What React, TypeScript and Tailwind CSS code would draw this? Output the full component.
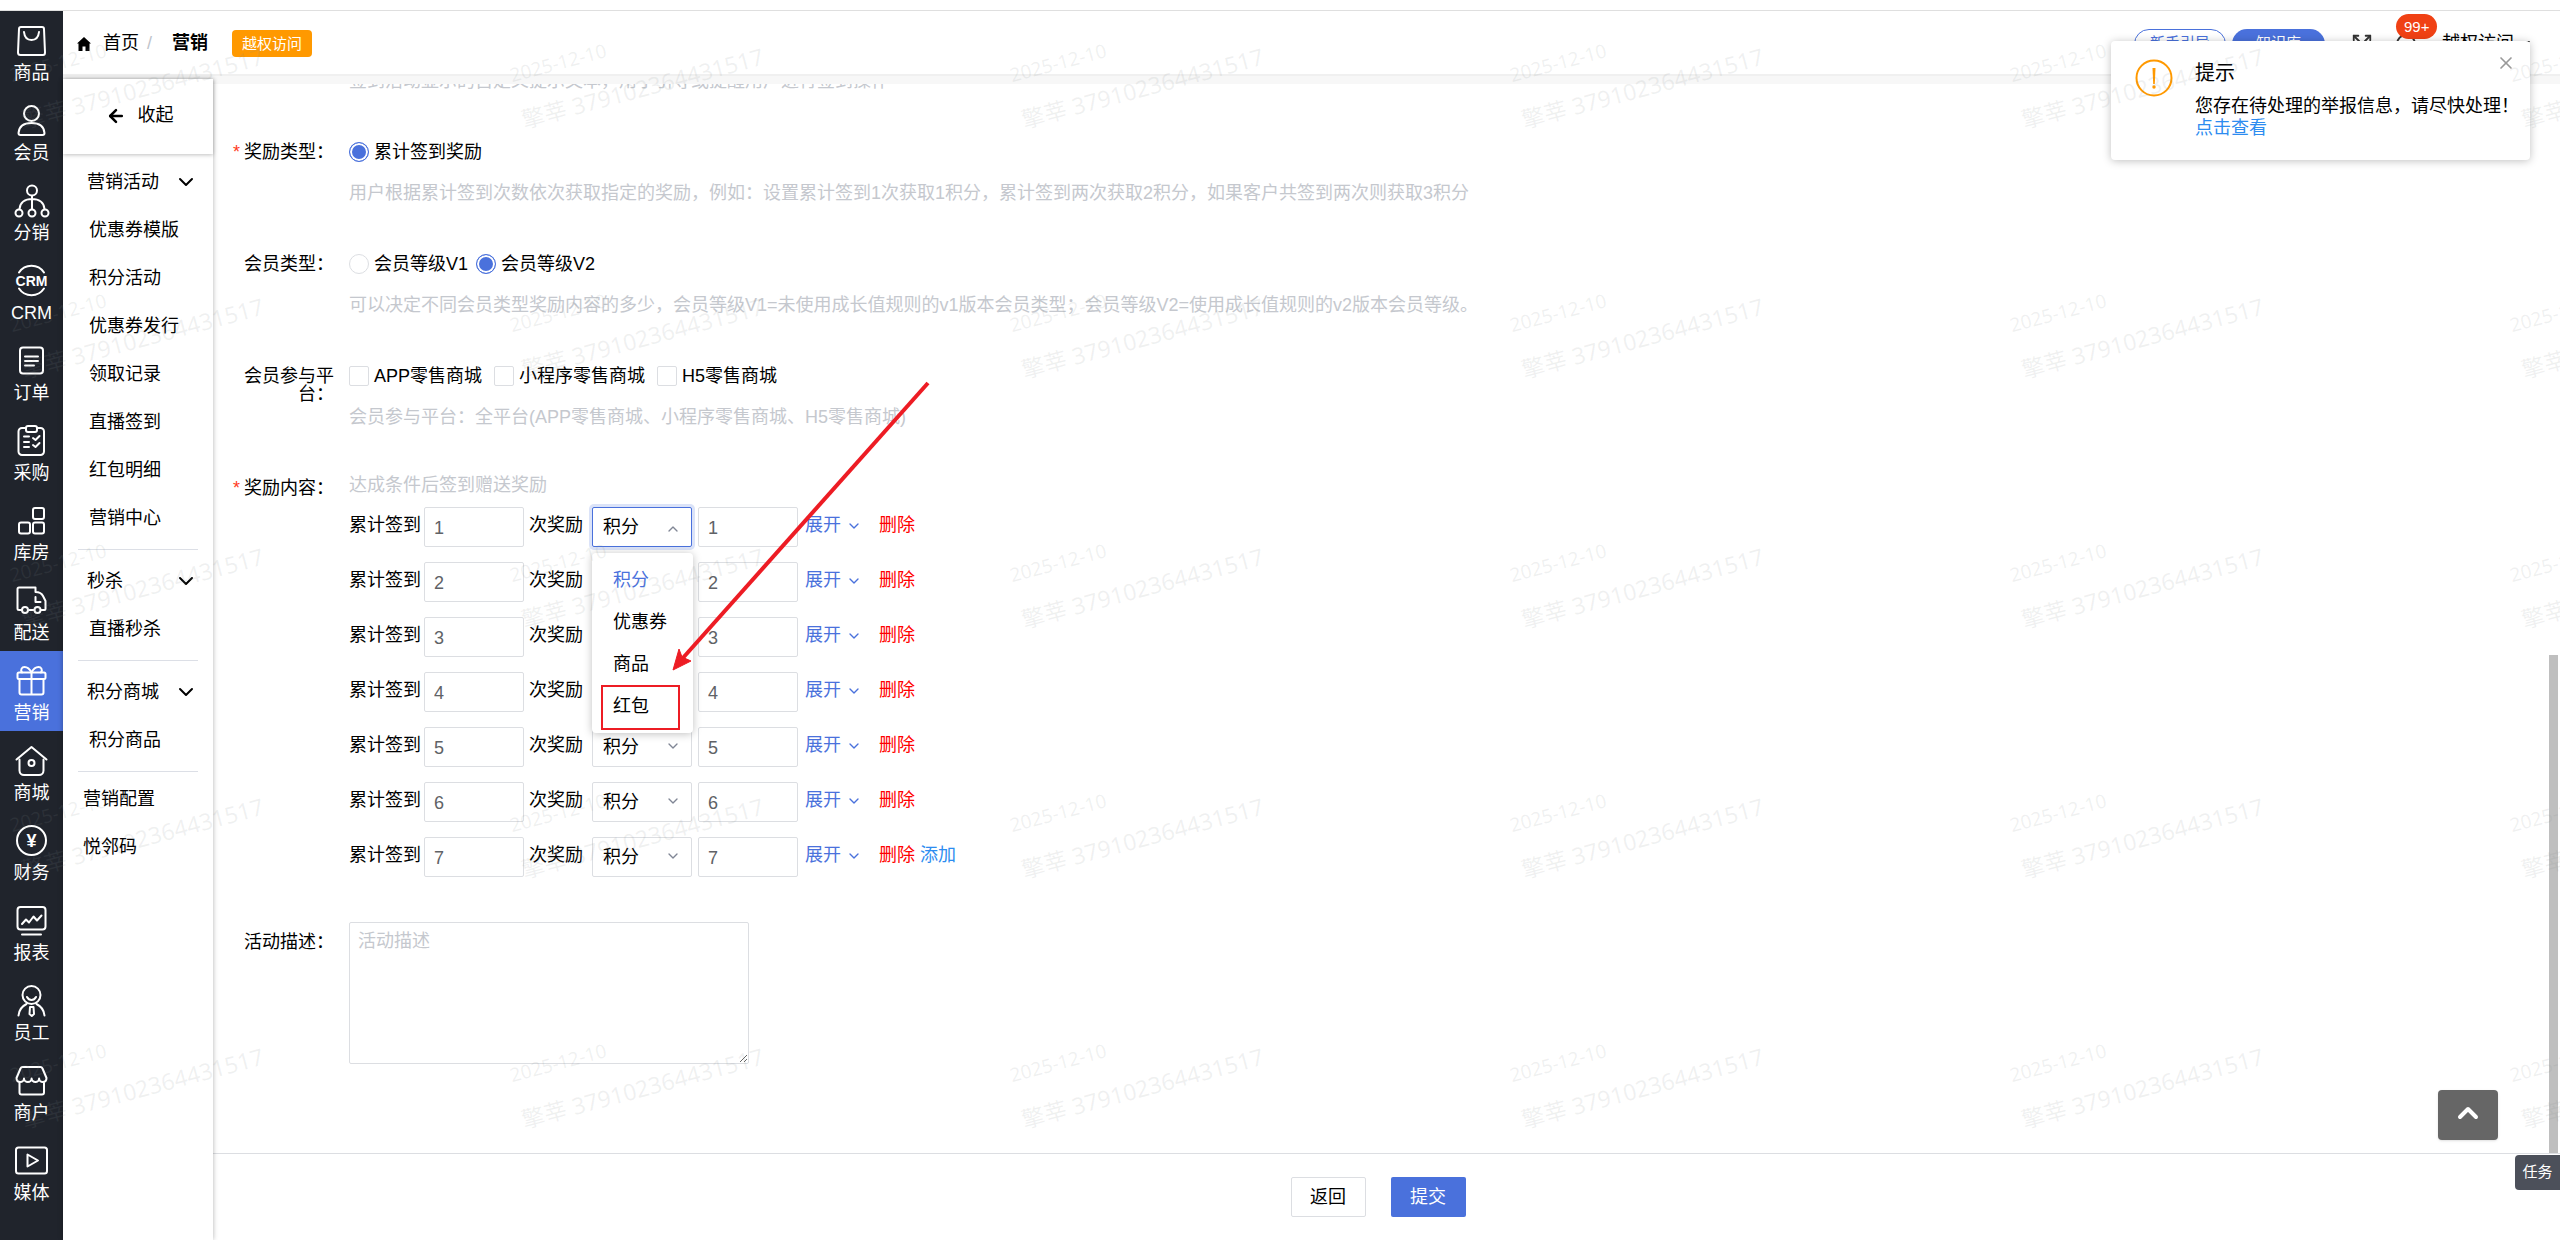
import { type ReactNode } from "react";
import { ArrowLeft, ChevronDown, ChevronUp, Expand, X } from "lucide-react";

type RailItem = { label: string; icon: ReactNode; active?: boolean };

const railItems: RailItem[] = [
  {
    label: "商品",
    icon: (
      <>
        <path d="M5 2h21c1 0 2 1 2 2l1 23.500c0 1.500-1 2.500-2 2.500H4.500c-1.500 0-2.500-1-2.500-2.500L3 4c0-1 1-2 2-2z" />
        <path d="M8 7c.5 5 3.500 8 7.500 8S22.500 12 23 7" />
      </>
    ),
  },
  {
    label: "会员",
    icon: (
      <>
        <circle cx="15.500" cy="8.500" r="7.500" />
        <path d="M4.500 30C3 30 2.500 29 2.500 28 3 21.500 8 18 15.500 18S28 21.500 28.500 28c0 1-.5 2-2 2z" />
      </>
    ),
  },
  {
    label: "分销",
    icon: (
      <>
        <circle cx="16" cy="5.500" r="5" />
        <circle cx="3" cy="28" r="3.500" />
        <circle cx="16" cy="28" r="3.500" />
        <circle cx="29" cy="28" r="3.500" />
        <path d="M16 11v13M3.500 24C4 17.500 9 14 16 14s12 3.500 12.500 10" />
      </>
    ),
  },
  {
    label: "CRM",
    icon: (
      <>
        <path d="M3 7.500a15 15 0 0 1 25 0M3 23.500a15 15 0 0 0 25 0" />
        <text
          x="15.500"
          y="20.500"
          textAnchor="middle"
          className="fill-white stroke-none text-[14px] font-bold"
        >
          CRM
        </text>
      </>
    ),
  },
  {
    label: "订单",
    icon: (
      <>
        <rect x="4" y="2.500" width="23" height="26" rx="3" />
        <path d="M9 11.500h13M9 16h13M9 20.500h9" />
      </>
    ),
  },
  {
    label: "采购",
    icon: (
      <>
        <path d="M10 3H6a3.500 3.500 0 0 0-3.500 3.500v20A3.500 3.500 0 0 0 6 30h18.500a3.500 3.500 0 0 0 3.500-3.500v-20A3.500 3.500 0 0 0 24.500 3H21" />
        <rect x="10" y="1" width="11" height="6" rx="2" />
        <path d="M8 11.500h5M8 17h5M8 22h5M17 13l2.500 2 4-4M17 20l2.500 2 4-4" />
      </>
    ),
  },
  {
    label: "库房",
    icon: (
      <>
        <rect x="17" y="3" width="11" height="11" rx="2" />
        <rect x="3" y="17.500" width="11" height="11" rx="2" />
        <rect x="17" y="17.500" width="11" height="11" rx="2" />
      </>
    ),
  },
  {
    label: "配送",
    icon: (
      <>
        <path d="M5.500 25H3c-1 0-1.500-.5-1.500-1.500V4c0-1 .5-1.500 1.500-1.500h16.500V7c3.500 0 6 1 7.500 4l2.500 5v8c0 .6-.4 1-1 1H25" />
        <path d="M12.500 25H18M19.500 12v5h5" />
        <circle cx="9" cy="25" r="3" />
        <circle cx="21.500" cy="25" r="3" />
      </>
    ),
  },
  {
    label: "营销",
    active: true,
    icon: (
      <>
        <rect x="1.500" y="7.500" width="28" height="6.500" rx="1.500" />
        <path d="M3.500 14v13.500c0 1 .8 2 2 2h20c1.200 0 2-1 2-2V14M15.500 7.500v22" />
        <path d="M6 7.500C4 4.500 6 2 8.500 2c3 0 5.500 2.500 7 5.500M25 7.500C27 4.500 25 2 22.500 2c-3 0-5.500 2.500-7 5.500" />
      </>
    ),
  },
  {
    label: "商城",
    icon: (
      <>
        <path d="M.5 14.500 15.500 2l15 12.500" />
        <path d="M3.500 14.500v11a4.500 4.500 0 0 0 4.500 4.500h15a4.500 4.500 0 0 0 4.500-4.500v-11" />
        <circle cx="15.500" cy="18" r="3" />
      </>
    ),
  },
  {
    label: "财务",
    icon: (
      <>
        <circle cx="15.500" cy="15.500" r="14.500" />
        <text
          x="15.500"
          y="21.500"
          textAnchor="middle"
          className="fill-white stroke-none text-[18px] font-bold"
        >
          ¥
        </text>
      </>
    ),
  },
  {
    label: "报表",
    icon: (
      <>
        <rect x="1.500" y="2" width="28" height="22.500" rx="3" />
        <path d="M6 19l4-4.500 3 3 4.500-6 3.500 4 4.500-5M6 29.500h19" />
      </>
    ),
  },
  {
    label: "员工",
    icon: (
      <>
        <circle cx="15.500" cy="10" r="9" />
        <path d="M11 12c1 2 2.500 3 4.500 3s3.500-1 4.500-3" />
        <path d="M2.500 30.500c.5-5.500 3-9 8-11.500M28.500 30.500c-.5-5.500-3-9-8-11.500" />
        <path d="M14 22h3.500l.5 7-2.200 2L13.500 29z" />
      </>
    ),
  },
  {
    label: "商户",
    icon: (
      <>
        <path d="M6.500 2h18c1 0 1.500.5 2 1.500L30.500 13c0 2.500-1.500 4-3.700 4-2 0-3.700-1.500-3.700-3.500 0 2-1.700 3.500-3.700 3.500s-3.800-1.500-3.800-3.500c0 2-1.700 3.500-3.700 3.500S8 15.500 8 13.500C8 15.500 6.300 17 4.200 17 2 17 .5 15.500.5 13l4-9.500c.5-1 1-1.500 2-1.500z" />
        <path d="M3.500 18v9.500c0 1.300.8 2 2 2h20.500c1.200 0 2-.7 2-2V18" />
      </>
    ),
  },
  {
    label: "媒体",
    icon: (
      <>
        <rect x="0" y="2.500" width="31" height="26" rx="2.500" />
        <path d="M11.500 9.500v12l10.500-6z" />
      </>
    ),
  },
];

const menuGroups = [
  {
    title: "营销活动",
    items: [
      "优惠券模版",
      "积分活动",
      "优惠券发行",
      "领取记录",
      "直播签到",
      "红包明细",
      "营销中心",
    ],
  },
  { title: "秒杀", items: ["直播秒杀"] },
  { title: "积分商城", items: ["积分商品"] },
];

const rewardRows = [1, 2, 3, 4, 5, 6, 7];
const rewardTypes = ["积分", "优惠券", "商品", "红包"];

function Rail() {
  return (
    <nav className="w-[63px] shrink-0 bg-[#20242c] text-white">
      {railItems.map((item) => (
        <a
          key={item.label}
          href="#"
          className={`flex h-20 flex-col items-center pt-[14px] ${item.active ? "bg-[#4a71dc]" : ""}`}
        >
          <svg
            viewBox="0 0 32 32"
            className="h-8 w-8 shrink-0 overflow-visible"
            fill="none"
            stroke="currentColor"
            strokeWidth="2"
            strokeLinecap="round"
            strokeLinejoin="round"
          >
            {item.icon}
          </svg>
          <span className="mt-[6px] leading-5">{item.label}</span>
        </a>
      ))}
    </nav>
  );
}

function Header() {
  return (
    <header className="flex h-[63px] shrink-0 items-center bg-white pt-[2px] pr-[30px] pl-[14px]">
      <svg viewBox="0 0 14 14" className="h-[14px] w-[14px]">
        <path d="M7 0 14 6.500h-1.500V14H8.500V9.500h-3V14h-4V6.500H0z" />
      </svg>
      <a href="#" className="ml-3">
        首页
      </a>
      <span className="ml-2 text-[#c0c4cc]">/</span>
      <strong className="ml-5">营销</strong>
      <span className="ml-6 rounded-sm bg-[#ff9900] px-[10px] text-[15px] leading-[27px] text-white">
        越权访问
      </span>
      <div className="ml-auto flex items-center">
        <button className="h-[30px] w-[92px] rounded-full border border-[#4a71dc] text-[15px] text-[#4a71dc]">
          新手引导
        </button>
        <button className="ml-[6px] h-[30px] w-[93px] rounded-full bg-[#4a71dc] text-[15px] text-white">
          知识库
        </button>
        <Expand className="ml-[26px] h-[22px] w-[22px] text-[#333]" />
        <div className="relative ml-[23px] h-5 w-5">
          <span className="block h-5 w-5 rounded-full border-2 border-[#333]" />
          <span className="absolute bottom-[15px] left-0 rounded-full bg-[#f04114] px-2 text-[15px] leading-[25px] text-white">
            99+
          </span>
        </div>
        <button className="ml-[26px] flex items-center gap-[6px]">
          越权访问
          <svg viewBox="0 0 10 6" className="h-[6px] w-[10px]">
            <path d="M0 0h10L5 6z" />
          </svg>
        </button>
      </div>
    </header>
  );
}

function SubMenu() {
  return (
    <aside className="z-10 mt-[3px] w-[150px] shrink-0 bg-white shadow-[0_0_5px_rgba(0,0,0,0.3)]">
      <button className="flex h-[75px] w-full items-center justify-center gap-3 pr-[2px] pb-[2px] pl-[5px] shadow-[0_1px_4px_rgba(0,0,0,0.25)]">
        <ArrowLeft className="h-5 w-5" strokeWidth={3} />
        收起
      </button>
      <div className="mt-1">
        {menuGroups.map((group) => (
          <section key={group.title}>
            <button className="flex h-12 w-full items-center justify-between pr-[15px] pl-6">
              {group.title}
              <ChevronDown className="h-6 w-6" />
            </button>
            {group.items.map((item) => (
              <a
                key={item}
                href="#"
                className="flex h-12 items-center pl-[26px]"
              >
                {item}
              </a>
            ))}
            <hr className="mx-[15px] my-[7px] border-[#dcdfe6]" />
          </section>
        ))}
        <div className="-mt-1">
          <a href="#" className="flex h-12 items-center pl-5">
            营销配置
          </a>
          <a href="#" className="flex h-12 items-center pl-5">
            悦邻码
          </a>
        </div>
      </div>
    </aside>
  );
}

type FormItemProps = {
  label: string;
  htmlFor?: string;
  required?: boolean;
  children: ReactNode;
};

function FormItem({ label, htmlFor, required, children }: FormItemProps) {
  return (
    <div className="flex">
      <label
        htmlFor={htmlFor}
        className="mt-[11px] mr-[15px] w-[110px] shrink-0 text-right leading-[18px]"
      >
        {required && <span className="mr-1 text-[#ff3b1d]">*</span>}
        {label}
      </label>
      <div className="min-w-0">{children}</div>
    </div>
  );
}

function Hint({ children }: { children: ReactNode }) {
  return <p className="leading-5 text-[#c5c8ce]">{children}</p>;
}

function Radio({
  name,
  label,
  checked,
}: {
  name: string;
  label: string;
  checked?: boolean;
}) {
  return (
    <label className="flex items-center gap-[5px]">
      <input
        type="radio"
        name={name}
        defaultChecked={checked}
        className="h-5 w-5 appearance-none rounded-full border border-[#dcdee2] bg-white checked:border-[#4a71dc] checked:bg-[#4a71dc] checked:shadow-[inset_0_0_0_2px_white]"
      />
      {label}
    </label>
  );
}

function Checkbox({ label }: { label: string }) {
  return (
    <label className="flex items-center gap-[5px]">
      <input
        type="checkbox"
        className="h-5 w-5 appearance-none rounded-xs border border-[#dcdee2] bg-white checked:bg-[#4a71dc]"
      />
      {label}
    </label>
  );
}

function RewardSelect({ open }: { open: boolean }) {
  return (
    <div className="relative ml-[9px]">
      <select
        aria-label="奖励类型"
        className={`block h-10 w-[100px] appearance-none rounded-xs border bg-white pl-[10px] ${open ? "border-[#4a71dc] shadow-[0_0_0_3px_rgba(74,113,220,0.2)]" : "border-[#dcdee2]"}`}
      >
        {rewardTypes.map((type) => (
          <option key={type}>{type}</option>
        ))}
      </select>
      {open ? (
        <ChevronUp className="pointer-events-none absolute top-[14px] right-[11px] h-4 w-4 text-[#808695]" />
      ) : (
        <ChevronDown className="pointer-events-none absolute top-[11px] right-[11px] h-4 w-4 text-[#808695]" />
      )}
      {open && (
        <ul className="absolute top-[46px] left-0 z-20 w-[101px] rounded-sm bg-white py-[6px] shadow-[0_1px_8px_rgba(0,0,0,0.25)]">
          {rewardTypes.map((type, index) => (
            <li
              key={type}
              className={`flex h-[42px] items-center pl-[21px] ${index === 0 ? "text-[#4a71dc]" : ""}`}
            >
              {type}
            </li>
          ))}
        </ul>
      )}
      {open && <Callout />}
    </div>
  );
}

// Red arrow and box pointing at the last option of the open list
function Callout() {
  return (
    <svg
      viewBox="0 0 340 352"
      className="pointer-events-none absolute -top-[127px] left-0 z-30 h-[352px] w-[340px] max-w-none"
    >
      <path d="M336 3 90 279" stroke="#ed1c24" strokeWidth="4" />
      <path
        d="m81 290 6-21 3 8 9 4z"
        fill="#ed1c24"
        stroke="#ed1c24"
        strokeLinejoin="round"
      />
      <rect
        x="10"
        y="306"
        width="77"
        height="43"
        fill="none"
        stroke="#ed1c24"
        strokeWidth="2"
      />
    </svg>
  );
}

function RewardRow({ day }: { day: number }) {
  const inputClass =
    "h-10 w-[100px] rounded-xs border border-[#dcdee2] bg-white px-[9px] pt-[3px] text-[#606266]";
  return (
    <div className="flex h-10">
      <label htmlFor={`day-${day}`} className="leading-[37px]">
        累计签到
      </label>
      <input
        id={`day-${day}`}
        defaultValue={day}
        className={`ml-[3px] ${inputClass}`}
      />
      <span className="ml-[5px] leading-[37px]">次奖励</span>
      <RewardSelect open={day === 1} />
      <input
        aria-label="奖励数量"
        defaultValue={day}
        className={`ml-[6px] ${inputClass}`}
      />
      <button className="ml-[7px] flex h-[37px] items-center gap-[5px] text-[#4a71dc]">
        展开
        <ChevronDown className="h-4 w-4" />
      </button>
      <button className="ml-[17px] h-[37px] text-[#ff0000]">删除</button>
      {day === rewardRows.length && (
        <button className="ml-[5px] h-[37px] text-[#2d8cf0]">添加</button>
      )}
    </div>
  );
}

function SignForm() {
  return (
    <form className="-mt-[13px] ml-[11px] flex flex-col">
      <div className="ml-[125px]">
        <Hint>签到活动显示的自定义提示文本，用于引导或提醒用户进行签到操作</Hint>
      </div>
      <div className="mt-[41px] flex flex-col gap-[41px]">
        <FormItem label="奖励类型：" required>
          <div className="mb-[11px] flex h-10 items-center">
            <Radio name="reward" label="累计签到奖励" checked />
          </div>
          <Hint>
            用户根据累计签到次数依次获取指定的奖励，例如：设置累计签到1次获取1积分，累计签到两次获取2积分，如果客户共签到两次则获取3积分
          </Hint>
        </FormItem>
        <FormItem label="会员类型：">
          <div className="mb-[11px] flex h-10 items-center gap-2">
            <Radio name="level" label="会员等级V1" />
            <Radio name="level" label="会员等级V2" checked />
          </div>
          <Hint>
            可以决定不同会员类型奖励内容的多少，会员等级V1=未使用成长值规则的v1版本会员类型；会员等级V2=使用成长值规则的v2版本会员等级。
          </Hint>
        </FormItem>
        <FormItem label="会员参与平台：">
          <div className="mb-[11px] flex h-10 items-center gap-3">
            <Checkbox label="APP零售商城" />
            <Checkbox label="小程序零售商城" />
            <Checkbox label="H5零售商城" />
          </div>
          <Hint>
            会员参与平台：全平台(APP零售商城、小程序零售商城、H5零售商城)
          </Hint>
        </FormItem>
        <FormItem label="奖励内容：" required>
          <div className="pt-[7px] pb-3">
            <Hint>达成条件后签到赠送奖励</Hint>
          </div>
          <div className="mb-1 flex flex-col gap-[15px]">
            {rewardRows.map((day) => (
              <RewardRow key={day} day={day} />
            ))}
          </div>
        </FormItem>
        <FormItem label="活动描述：" htmlFor="desc">
          <textarea
            id="desc"
            placeholder="活动描述"
            className="block h-[142px] w-[400px] rounded-xs border border-[#dcdee2] px-2 py-1 leading-7 placeholder:text-[#c5c8ce]"
          />
        </FormItem>
      </div>
    </form>
  );
}

function Notice() {
  return (
    <div
      role="alert"
      className="absolute top-[41px] right-[30px] z-40 flex w-[419px] rounded-sm bg-white pt-[18px] pr-4 pb-[21px] pl-6 shadow-[0_1px_8px_rgba(0,0,0,0.25)]"
    >
      <svg viewBox="0 0 38 38" className="h-[38px] w-[38px] shrink-0">
        <circle
          cx="19"
          cy="19"
          r="17.500"
          fill="none"
          stroke="#ff9900"
          strokeWidth="2"
        />
        <path d="M17.500 9h3l-.7 16h-1.600z" fill="#ff9900" />
        <circle cx="19" cy="28" r="1.700" fill="#ff9900" />
      </svg>
      <div className="ml-[22px] pt-[1px] whitespace-nowrap">
        <p className="text-xl leading-[26px]">提示</p>
        <p className="mt-[9px] leading-[22px]">
          您存在待处理的举报信息，请尽快处理！
        </p>
        <a href="#" className="block leading-[22px] text-[#2d8cf0]">
          点击查看
        </a>
      </div>
      <button aria-label="关闭" className="absolute top-3 right-[14px]">
        <X className="h-5 w-5 text-[#999]" strokeWidth={2} />
      </button>
    </div>
  );
}

function Watermark() {
  return (
    <div
      aria-hidden="true"
      className="pointer-events-none absolute inset-0 z-50 grid auto-rows-[250px] grid-cols-[repeat(6,500px)] overflow-hidden font-['Noto_Sans','Noto_Sans_CJK_SC',sans-serif] whitespace-nowrap text-[#808c8c]/12 select-none"
    >
      {Array.from({ length: 30 }, (_, index) => (
        <div key={index} className="pt-16 pl-[7px]">
          <div className="origin-top-left -rotate-15">
            <p className="text-[19px] leading-6">2025-12-10</p>
            <p className="mt-[18px] text-[23px] leading-8">
              擎莘 379102364431517
            </p>
          </div>
        </div>
      ))}
    </div>
  );
}

export default function App() {
  return (
    <div className="relative flex h-screen flex-col overflow-hidden bg-white pt-[10px] font-['Liberation_Sans','Noto_Sans_CJK_SC',sans-serif] text-[18px] text-black">
      <div className="flex min-h-0 flex-1 border-t border-[#dfdfdf]">
        <Rail />
        <div className="flex min-w-0 flex-1 flex-col">
          <Header />
          <div className="flex min-h-0 flex-1 border-t-2 border-[#f0f0f0] bg-[#f7f7f7]">
            <SubMenu />
            <div className="flex min-w-0 flex-1 flex-col pt-2">
              <main className="relative min-h-0 flex-1 overflow-hidden bg-white">
                <SignForm />
                <div className="absolute right-[2px] bottom-0 h-[498px] w-[9px] bg-[#bfbfbf]" />
                <button
                  aria-label="返回顶部"
                  className="absolute right-[62px] bottom-[13px] flex h-[50px] w-[60px] items-center justify-center rounded-sm bg-[#666] pb-1 text-white shadow"
                >
                  <ChevronUp className="h-8 w-8" strokeWidth={3} />
                </button>
              </main>
              <footer className="relative flex h-[87px] shrink-0 items-center justify-center gap-[25px] border-t border-[#dcdee2] bg-white pr-[17px]">
                <button className="h-10 w-[75px] rounded-xs border border-[#dcdee2]">
                  返回
                </button>
                <button className="h-10 w-[75px] rounded-xs bg-[#4a71dc] text-white">
                  提交
                </button>
                <button className="absolute top-[1px] right-0 h-[35px] w-[45px] rounded-l-sm bg-[#4c505a] text-[15px] text-white">
                  任务
                </button>
              </footer>
            </div>
          </div>
        </div>
      </div>
      <Notice />
      <Watermark />
    </div>
  );
}
